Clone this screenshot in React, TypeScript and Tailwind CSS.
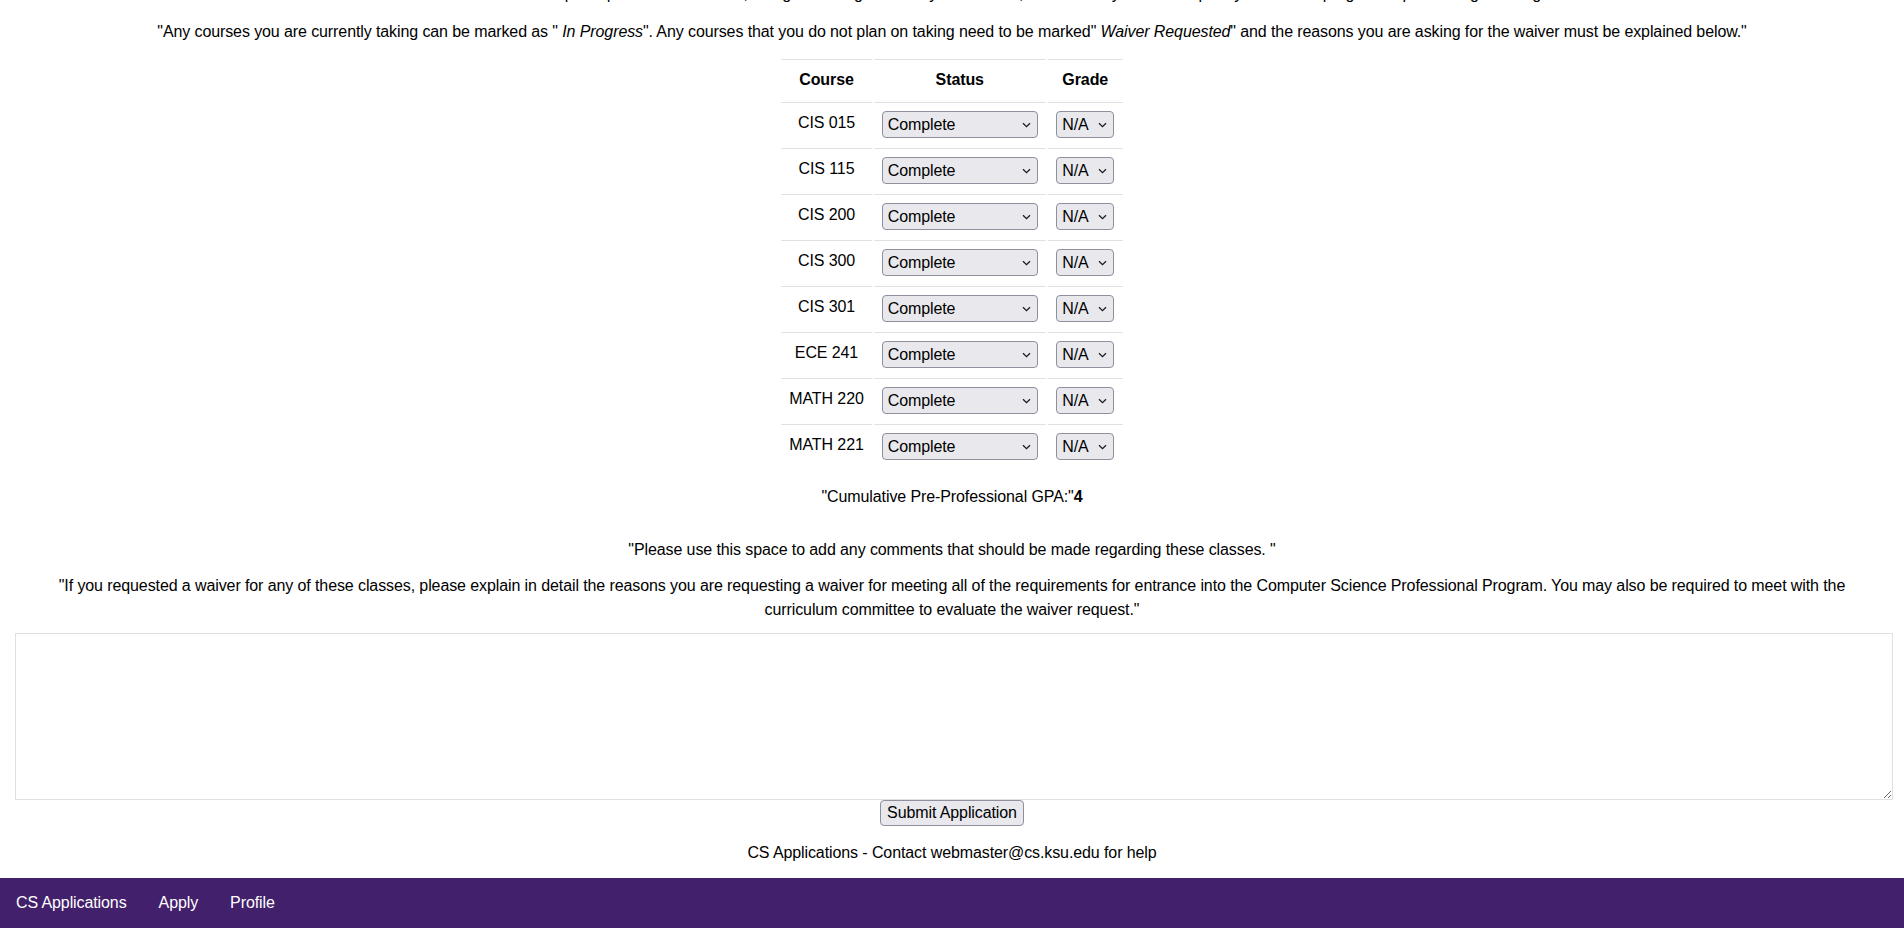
import React, { useState } from 'react';

const courses = ['CIS 015', 'CIS 115', 'CIS 200', 'CIS 300', 'CIS 301', 'ECE 241', 'MATH 220', 'MATH 221'];

const Chevron = () => (
    <svg width="9" height="6" viewBox="0 0 9 6" className="pointer-events-none absolute top-1/2 -translate-y-1/2 right-[7px]">
        <path d="M1 1.2 L4.5 4.6 L8 1.2" fill="none" stroke="#1c1b22" strokeWidth="1.3" />
    </svg>
);

const Select: React.FC<{ value: string; options: string[]; width: string }> = ({ value, options, width }) => {
    const [val, setVal] = useState(value);
    return (
        <div className={`relative inline-block align-top ${width}`}>
            <select
                value={val}
                onChange={(e) => setVal(e.target.value)}
                className="appearance-none w-full h-[27px] pl-[5px] pr-[20px] bg-[#e9e9ed] border border-[#8f8f9d] rounded-[4px] text-black text-base leading-[25px] outline-none"
            >
                {options.map((o) => (
                    <option key={o} value={o}>{o}</option>
                ))}
            </select>
            <Chevron />
        </div>
    );
};

export default function App() {
    const [comment, setComment] = useState('');

    return (
        <div className="h-screen overflow-hidden flex flex-col bg-white text-black text-base leading-6 tracking-[-0.1px]" style={{ fontFamily: '"Segoe UI", "Liberation Sans", Arial, sans-serif' }}>
            <div className="flex flex-col items-center text-center">
                <p className="mt-[-18px] whitespace-nowrap">
                    Please indicate the status of each prerequisite course below, along with the grade that you received, as listed on your transcript or your current progress report through the registrar.
                </p>
                <p className="mt-[14px] whitespace-nowrap">
                    "Any courses you are currently taking can be marked as " <i>In Progress</i>". Any courses that you do not plan on taking need to be marked" <i>Waiver Requested</i>" and the reasons you are asking for the waiver must be explained below."
                </p>

                <table className="mt-[13px] border-separate border-spacing-[2px]">
                    <thead>
                        <tr>
                            <th className="w-[90px] border-t border-[#dee2e6] p-2 font-bold">Course</th>
                            <th className="w-[172px] border-t border-[#dee2e6] p-2 font-bold">Status</th>
                            <th className="w-[75px] border-t border-[#dee2e6] p-2 font-bold">Grade</th>
                        </tr>
                    </thead>
                    <tbody>
                        {courses.map((c) => (
                            <tr key={c}>
                                <td className="border-t border-[#dee2e6] p-2 align-top whitespace-nowrap">{c}</td>
                                <td className="border-t border-[#dee2e6] p-2 align-top">
                                    <Select value="Complete" options={['Complete', 'In Progress', 'Waiver Requested']} width="w-[156px]" />
                                </td>
                                <td className="border-t border-[#dee2e6] p-2 align-top">
                                    <Select value="N/A" options={['N/A', 'A', 'B', 'C', 'D', 'F']} width="w-[58px]" />
                                </td>
                            </tr>
                        ))}
                    </tbody>
                </table>

                <p className="mt-[15px]">"Cumulative Pre-Professional GPA:"<b>4</b></p>

                <p className="mt-[29px]">"Please use this space to add any comments that should be made regarding these classes. "</p>
                <p className="mt-[12px]">
                    "If you requested a waiver for any of these classes, please explain in detail the reasons you are requesting a waiver for meeting all of the requirements for entrance into the Computer Science Professional Program. You may also be required to meet with the
                    <br />
                    curriculum committee to evaluate the waiver request."
                </p>
            </div>

            <div className="pl-[15px] mt-[11px]">
                <textarea
                    value={comment}
                    onChange={(e) => setComment(e.target.value)}
                    className="block w-[1878px] h-[167px] border border-[#e0e0e0] outline-none p-1"
                />
            </div>
            <div className="flex justify-center">
                <button className="h-[26px] px-[6px] bg-[#e9e9ed] border border-[#8f8f9d] rounded-[4px] leading-[24px]">
                    Submit Application
                </button>
            </div>

            <div className="mt-[15px] text-center">
                CS Applications - Contact webmaster@cs.ksu.edu for help
            </div>

            <nav className="mt-auto h-[50px] shrink-0 bg-[#42206b] flex items-center text-white pl-4">
                <a className="pr-4">CS Applications</a>
                <a className="px-4">Apply</a>
                <a className="px-4">Profile</a>
            </nav>
        </div>
    );
}
